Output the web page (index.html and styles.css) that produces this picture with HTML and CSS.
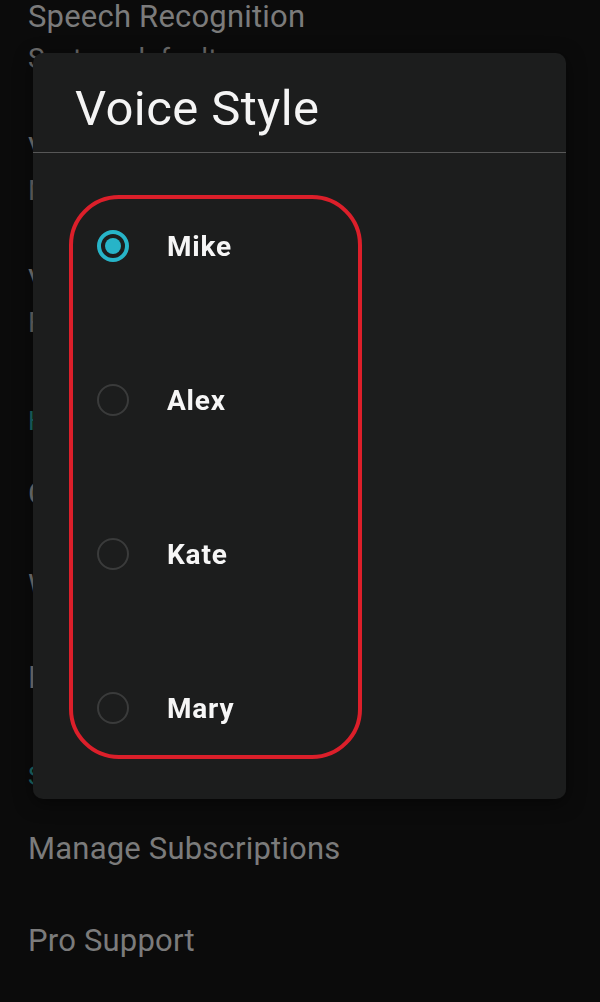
FILE: index.html
```html
<!DOCTYPE html>
<html lang="en">
<head>
  <meta charset="UTF-8" />
  <meta name="viewport" content="width=device-width, initial-scale=1.0"/>
  <title>Voice Style</title>
  <link rel="stylesheet" href="styles.css">
</head>
<body>
  <div class="settings">
    <div class="item">
      <div class="title">Speech Recognition</div>
      <div class="sub">System default</div>
    </div>
    <div class="item">
      <div class="title">Voice Style</div>
      <div class="sub">Mike</div>
    </div>
    <div class="item">
      <div class="title">Voice Speed</div>
      <div class="sub">Fast</div>
    </div>

    <div class="header">Help</div>
    <div class="row">Contact us</div>
    <div class="row">What's new</div>
    <div class="row">How to use</div>

    <div class="header">Subscription</div>
    <div class="row">Manage Subscriptions</div>
    <div class="row">Pro Support</div>
  </div>

  <div class="dialog">
    <h2 class="dialog-title">Voice Style</h2>
    <div class="options">
      <div class="option checked">
        <span class="radio"></span>
        <span class="label">Mike</span>
      </div>
      <div class="option">
        <span class="radio"></span>
        <span class="label">Alex</span>
      </div>
      <div class="option">
        <span class="radio"></span>
        <span class="label">Kate</span>
      </div>
      <div class="option">
        <span class="radio"></span>
        <span class="label">Mary</span>
      </div>
    </div>
  </div>
</body>
</html>
```

FILE: styles.css
```css
body {
  margin: 0;
  font-family: Roboto, 'Noto Sans', sans-serif;
  background: #0b0b0b;
  height: 100vh;
  overflow: hidden;
}

/* settings list sitting behind the dialog */
.settings {
  margin-top: -27px;
  padding-left: 28px;
  color: #7b7b7b;
  font-size: 31px;
  letter-spacing: 0.2px;
}

.item {
  padding: 24px 0;
}

.item .title {
  line-height: 40px;
}

.item .sub {
  line-height: 44px;
  font-size: 28px;
  color: #6c6c6c;
}

.header {
  padding: 32px 0 7px;
  line-height: 40px;
  font-size: 26px;
  color: #1d6d6d;
}

.row {
  padding: 26px 0;
  line-height: 40px;
}

/* dialog */
.dialog {
  position: fixed;
  left: 33px;
  top: 53px;
  width: 533px;
  height: 746px;
  background: #1c1d1d;
  border-radius: 10px;
  box-shadow: 0 4px 18px rgba(0, 0, 0, 0.5);
}

.dialog-title {
  margin: 0;
  height: 100px;
  box-sizing: border-box;
  padding: 28px 0 0 42px;
  font-size: 49px;
  font-weight: 400;
  line-height: 56px;
  letter-spacing: 0.4px;
  color: #f4f4f4;
  border-bottom: 1px solid #575757;
}

.options {
  margin: 42px 0 0 36px;
  width: 293px;
  box-sizing: border-box;
  border: 4px solid #dc1f2a;
  border-radius: 50px;
  display: flex;
  flex-direction: column;
  gap: 60px;
}

.option {
  height: 94px;
  display: flex;
  align-items: center;
  padding-left: 24px;
}

.radio {
  width: 32px;
  height: 32px;
  box-sizing: border-box;
  border: 2.5px solid #3a3b3b;
  border-radius: 50%;
  display: flex;
  justify-content: center;
  align-items: center;
}

.option.checked .radio {
  border: 4px solid #27b4c8;
}

.option.checked .radio::after {
  content: '';
  width: 16px;
  height: 16px;
  border-radius: 50%;
  background: #27b4c8;
}

.label {
  margin-left: 38px;
  font-size: 28px;
  font-weight: 700;
  letter-spacing: 0.8px;
  color: #f6f6f6;
}
```
